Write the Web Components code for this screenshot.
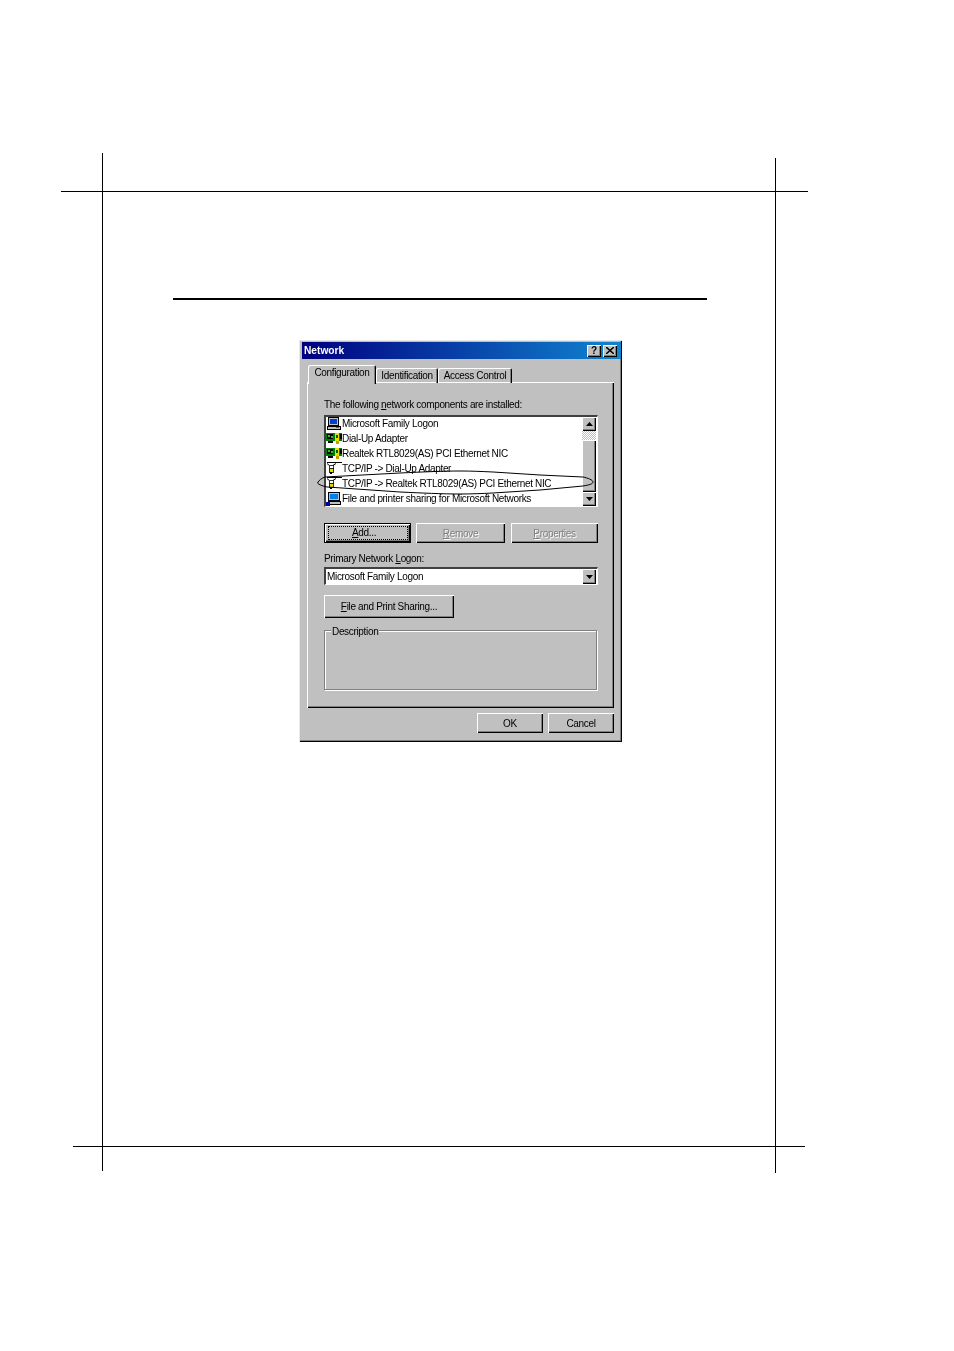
<!DOCTYPE html>
<html>
<head>
<meta charset="utf-8">
<title>Network</title>
<style>
  body { margin: 0; background: #fff; font-family: "Liberation Sans", Arial, sans-serif; }
</style>
</head>
<body>
<manual-page>
  <net-dialog title-text="Network">
    <net-tab active style="width:68px">Configuration</net-tab>
    <net-tab style="width:62px">Identification</net-tab>
    <net-tab style="width:74px">Access Control</net-tab>
    <net-list>
      <net-row icon="pc">Microsoft Family Logon</net-row>
      <net-row icon="nic">Dial-Up Adapter</net-row>
      <net-row icon="nic">Realtek RTL8029(AS) PCI Ethernet NIC</net-row>
      <net-row icon="tcp">TCP/IP -&gt; Dial-Up Adapter</net-row>
      <net-row icon="tcp">TCP/IP -&gt; Realtek RTL8029(AS) PCI Ethernet NIC</net-row>
      <net-row icon="share">File and printer sharing for Microsoft Networks</net-row>
    </net-list>
  </net-dialog>
</manual-page>
<script>
const ICONS = {
  pc: `<rect x="2.500" y="1.500" width="10" height="8" fill="#c0c0c0" stroke="#000"/><rect x="4" y="3" width="7" height="5" fill="#0040d0"/><rect x="1.500" y="10.500" width="13" height="3" fill="#c0c0c0" stroke="#000"/><rect x="10" y="11" width="3" height="1" fill="#00a000"/>`,
  nic: `<rect x="0" y="2" width="16" height="8" fill="#008000"/><rect x="1" y="3" width="6" height="5" fill="#000"/><rect x="2" y="4" width="2" height="2" fill="#30c030"/><rect x="5" y="5" width="2" height="2" fill="#30c030"/><rect x="9" y="2" width="4" height="8" fill="#e8e000"/><rect x="10" y="4" width="2" height="3" fill="#006000"/><rect x="14" y="3" width="2" height="5" fill="#000"/><rect x="2" y="10" width="5" height="2" fill="#000"/><rect x="10" y="10" width="3" height="3" fill="#c0a000"/>`,
  tcp: `<path d="M1 1.500H16" stroke="#000"/><path d="M1 2.500L4 5M10 2.500L6 5" fill="none" stroke="#000" shape-rendering="auto"/><rect x="3" y="4" width="4" height="3" fill="#fff" stroke="#000" stroke-width=".8"/><rect x="3" y="7" width="4" height="4" fill="#e8d800" stroke="#000" stroke-width=".8"/><rect x="4" y="11" width="2" height="2" fill="#000"/>`,
  share: `<rect x="2.500" y="1.500" width="11" height="8" fill="#c0c0c0" stroke="#000"/><rect x="4" y="3" width="8" height="5" fill="#0080f0"/><rect x="2.500" y="10.500" width="12" height="3" fill="#c0c0c0" stroke="#000"/><rect x="0" y="11" width="4" height="4" fill="#0000a0"/>`
};

class ManualPage extends HTMLElement {
  constructor() {
    super();
    this.attachShadow({ mode: 'open' });
    this.shadowRoot.innerHTML = `
      <style>
        :host { display: block; position: relative; width: 954px; height: 1351px; overflow: hidden; background: #fff; }
        .mark { position: absolute; background: #000; }
        .rule { height: 2px; width: 534px; margin-left: 173px; background: #000; }
        .top { height: 298px; }
        .gap { height: 40px; }
        .holder { margin-left: 299px; }
      </style>
      <div class="mark" style="left:102px;top:153px;width:1px;height:1018px"></div>
      <div class="mark" style="left:775px;top:158px;width:1px;height:1015px"></div>
      <div class="mark" style="left:61px;top:191px;width:747px;height:1px"></div>
      <div class="mark" style="left:73px;top:1146px;width:732px;height:1px"></div>
      <div class="top"></div>
      <div class="rule"></div>
      <div class="gap"></div>
      <div class="holder"><slot></slot></div>
    `;
  }
}

class NetTab extends HTMLElement {
  constructor() {
    super();
    this.attachShadow({ mode: 'open' });
    this.shadowRoot.innerHTML = `
      <style>
        :host { display: block; position: relative; box-sizing: border-box; height: 15px; text-align: center; line-height: 15px; margin-top: 3px;
          box-shadow: inset 1px 1px 0 #fff, inset -1px 0 0 #000, inset -2px 0 0 #808080; border-radius: 2px 2px 0 0; white-space: nowrap; }
        :host([active]) { height: 19px; line-height: 16px; margin-top: 0; margin-bottom: -2px; background: #c0c0c0; z-index: 1; }
      </style>
      <slot></slot>
    `;
  }
}

class NetRow extends HTMLElement {
  constructor() {
    super();
    this.attachShadow({ mode: 'open' });
    const icon = ICONS[this.getAttribute('icon')] || '';
    this.shadowRoot.innerHTML = `
      <style>
        :host { display: flex; align-items: center; height: 15px; white-space: nowrap; color: #000; }
        svg { width: 16px; height: 15px; flex: none; }
      </style>
      <svg viewBox="0 0 16 15" shape-rendering="crispEdges">${icon}</svg>
      <span><slot></slot></span>
    `;
  }
}

class NetList extends HTMLElement {
  constructor() {
    super();
    this.attachShadow({ mode: 'open' });
    this.shadowRoot.innerHTML = `
      <style>
        :host { display: block; position: relative; width: 274px; height: 92px; box-sizing: border-box; background: #fff;
          border-top: 2px solid #404040; border-left: 2px solid #404040; border-right: 1px solid #fff; border-bottom: 1px solid #fff; }
        .body { display: flex; height: 100%; }
        .rows { flex: 1; margin-top: -1px; overflow: hidden; }
        .bar { width: 14px; margin-right: 1px; display: flex; flex-direction: column; background: #c0c0c0; }
        .arr { height: 14px; flex: none; box-sizing: border-box; background: #c0c0c0; display: flex; align-items: center; justify-content: center;
          box-shadow: inset 1px 1px 0 #fff, inset -1px -1px 0 #000, inset -2px -2px 0 #808080; }
        .track { height: 9px; flex: none; background: repeating-conic-gradient(#fff 0 25%, #c0c0c0 0 50%) 0 0 / 2px 2px; }
        .thumb { flex: 1; box-shadow: inset 1px 1px 0 #fff, inset -1px -1px 0 #000, inset -2px -2px 0 #808080; }
        .ring { position: absolute; left: -9px; top: 52px; overflow: visible; pointer-events: none; }
      </style>
      <div class="body">
        <div class="rows"><slot></slot></div>
        <div class="bar">
          <div class="arr"><svg width="7" height="4"><path d="M3.5 0L7 4H0Z"/></svg></div>
          <div class="track"></div>
          <div class="thumb"></div>
          <div class="arr"><svg width="7" height="4"><path d="M0 0H7L3.5 4Z"/></svg></div>
        </div>
      </div>
      <svg class="ring" width="278" height="27" fill="none" stroke="#000" stroke-width="1">
        <path d="M.5 14C2 11 5 9 8 8L83 4C105 3 125 2 143 2C155 2 165 2.500 176 3L223 6L266 8C271 9 276 11 276 13C276 15 272 16 266 17L223 21L176 24C165 24.500 155 25 143 25C125 25 105 24 83 23L25 19L10 18C6 17 2 16 .5 14Z"/>
      </svg>
    `;
  }
}

class NetDialog extends HTMLElement {
  constructor() {
    super();
    this.attachShadow({ mode: 'open' });
    const title = this.getAttribute('title-text') || '';
    this.shadowRoot.innerHTML = `
      <style>
        :host { display: block; width: 323px; height: 402px; box-sizing: border-box; background: #c0c0c0; padding: 2px;
          font: 10px "Liberation Sans", Arial, sans-serif; letter-spacing: -.33px; color: #000; filter: blur(.3px);
          box-shadow: inset 1px 1px 0 #e8e8e8, inset -1px -1px 0 #000, inset -2px -2px 0 #808080; }
        u { text-decoration: underline; }
        .title { height: 17px; margin: 0 -1px 0 1px; padding: 0 4px 0 2px; display: flex; align-items: center; justify-content: space-between;
          background: linear-gradient(90deg, #000080, #1084d0); color: #fff; letter-spacing: 0; font: bold 10.2px "Liberation Sans", Arial, sans-serif; }
        .caps { display: flex; gap: 1px; }
        .cap { width: 14px; height: 12px; background: #c0c0c0; display: flex; align-items: center; justify-content: center;
          color: #000; font-size: 10px; box-shadow: inset 1px 1px 0 #fff, inset -1px -1px 0 #000, inset -2px -2px 0 #808080; }
        .cap + .cap { margin-left: 1px; }
        .tabs { display: flex; margin: 6px 0 0 7px; height: 17px; position: relative; z-index: 1; }
        .panel { margin-left: 6px; width: 307px; height: 326px; box-sizing: border-box; background: #c0c0c0; padding: 16px 16px 0 17px;
          box-shadow: inset 1px 1px 0 #fff, inset -1px -1px 0 #000, inset -2px -2px 0 #808080; }
        .lbl { height: 13px; line-height: 13px; white-space: nowrap; }
        .list { margin-top: 4px; }
        .btns { display: flex; margin-top: 16px; }
        .btn { height: 20px; box-sizing: border-box; display: flex; align-items: center; justify-content: center; background: #c0c0c0;
          box-shadow: inset 1px 1px 0 #fff, inset -1px -1px 0 #000, inset -2px -2px 0 #808080; white-space: nowrap; }
        .btn.def { outline: 1px solid #000; outline-offset: -1px; position: relative; box-shadow: inset 2px 2px 0 #fff, inset -2px -2px 0 #000, inset -3px -3px 0 #808080; }
        .btn.def span { border: 1px dotted #000; box-sizing: border-box; width: 80px; height: 14px; padding-right: 7px; text-align: center; line-height: 12px; }
        .dis { color: #808080; text-shadow: 1px 1px 0 #fff; }
        .logon { margin-top: 9px; }
        .combo { margin-top: 2px; width: 274px; height: 18px; box-sizing: border-box; background: #fff; border-top: 2px solid #404040; border-left: 2px solid #404040;
          border-right: 1px solid #fff; border-bottom: 1px solid #fff; display: flex; justify-content: space-between; align-items: center; padding-left: 1px; }
        .combo > span { margin-top: -1px; }
        .drop { width: 14px; height: 15px; margin-right: 1px; background: #c0c0c0; display: flex; align-items: center; justify-content: center;
          box-shadow: inset 1px 1px 0 #fff, inset -1px -1px 0 #000, inset -2px -2px 0 #808080; }
        .btn.share { width: 130px; height: 23px; margin-top: 10px; padding-bottom: 1px; }
        .group { position: relative; margin-top: 12px; width: 273px; height: 60px; box-sizing: border-box; border: 1px solid #808080; box-shadow: 1px 1px 0 #fff, inset 1px 1px 0 #fff; }
        .legend { position: absolute; left: 6px; top: -6px; background: #c0c0c0; padding: 0 1px; line-height: 13px; }
        .foot { display: flex; justify-content: flex-end; gap: 5px; margin: 5px 6px 0 0; }
        .foot .btn { width: 66px; height: 20px; }
      </style>
      <div class="title">
        <span>${title}</span>
        <div class="caps">
          <div class="cap"><b>?</b></div>
          <div class="cap"><svg width="8" height="7" stroke="#000" stroke-width="1.500"><path d="M0 0L8 7M8 0L0 7"/></svg></div>
        </div>
      </div>
      <div class="tabs"><slot name="tabs"></slot></div>
      <div class="panel">
        <div class="lbl">The following <u>n</u>etwork components are installed:</div>
        <div class="list"><slot></slot></div>
        <div class="btns">
          <div class="btn def" style="width:87px"><span><u>A</u>dd...</span></div>
          <div class="btn dis" style="width:89px;margin-left:5px"><span><u>R</u>emove</span></div>
          <div class="btn dis" style="width:87px;margin-left:6px"><span><u>P</u>roperties</span></div>
        </div>
        <div class="lbl logon">Primary Network <u>L</u>ogon:</div>
        <div class="combo"><span>Microsoft Family Logon</span>
          <div class="drop"><svg width="7" height="4"><path d="M0 0H7L3.5 4Z"/></svg></div></div>
        <div class="btn share"><span><u>F</u>ile and Print Sharing...</span></div>
        <div class="group"><div class="legend">Description</div></div>
      </div>
      <div class="foot">
        <div class="btn">OK</div>
        <div class="btn">Cancel</div>
      </div>
    `;
    for (const tab of this.querySelectorAll('net-tab')) tab.slot = 'tabs';
  }
}

customElements.define('manual-page', ManualPage);
customElements.define('net-tab', NetTab);
customElements.define('net-row', NetRow);
customElements.define('net-list', NetList);
customElements.define('net-dialog', NetDialog);
</script>
</body>
</html>
